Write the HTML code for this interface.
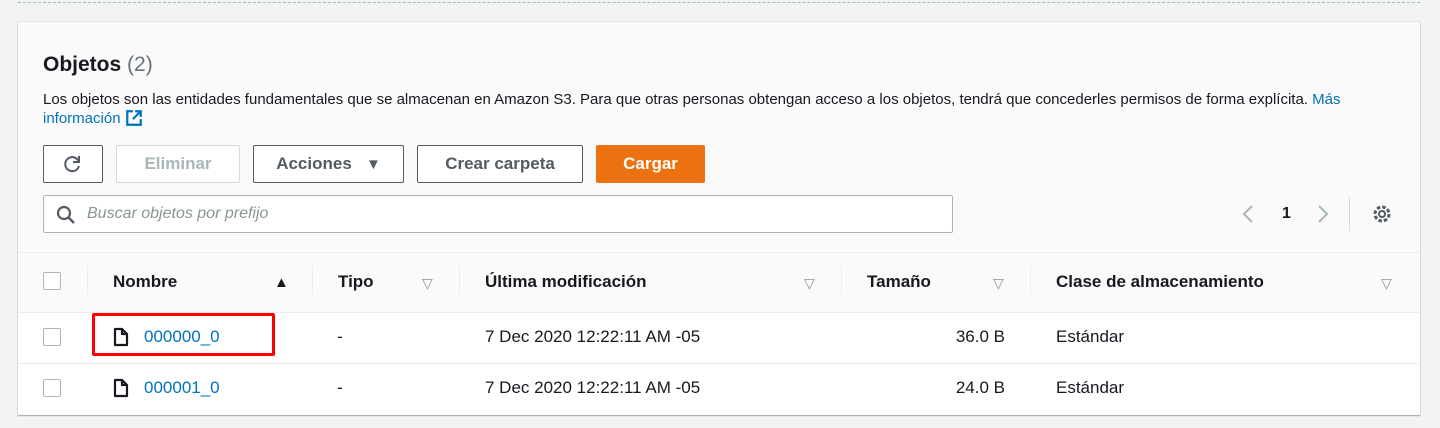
<!DOCTYPE html>
<html><head><meta charset="utf-8"><style>
*{box-sizing:border-box;margin:0;padding:0}
body{width:1440px;height:428px;background:#f2f3f3;font-family:"Liberation Sans",sans-serif;position:relative;overflow:hidden;color:#16191f}
.a{position:absolute}
.dash{left:18px;top:0;width:1402px;height:3px;border-bottom:1px dashed #aab7b8}
.panel{left:18px;top:22px;width:1402px;height:393px;background:#fafafa;box-shadow:0 1px 1px rgba(0,28,36,.3),0 0 0 1px #e3e6e6}
.btn{position:absolute;top:145px;height:38px;border:1px solid #545b64;border-radius:2px;background:#fff;font-weight:bold;font-size:17px;color:#545b64;display:flex;align-items:center;justify-content:center}
.th{position:absolute;top:272px;font-weight:bold;font-size:17px;color:#16191f}
.sep{position:absolute;top:265px;width:1px;height:30px;background:#eaeded}
.tri{position:absolute;top:275px;font-size:14px;color:#879596}
.row{position:absolute;left:18px;width:1402px;height:51px;background:#fff;border-top:1px solid #eaeded}
.cb{position:absolute;left:43px;width:18px;height:18px;border:1px solid #aab7b8;border-radius:2px;background:#fff}
.td{position:absolute;font-size:17px}
.lk{color:#0073bb}
</style></head><body>
<div class="a dash"></div>
<div class="a panel"></div>
<div class="a" style="left:43px;top:53px;font-size:21px;font-weight:bold">Objetos <span style="font-weight:normal;color:#687078">(2)</span></div>
<div class="a" style="left:43px;top:91px;width:1340px;font-size:15px;line-height:18px;color:#16191f">Los objetos son las entidades fundamentales que se almacenan en Amazon S3. Para que otras personas obtengan acceso a los objetos, tendrá que concederles permisos de forma explícita. <span class="lk">Más información</span> <svg width="18" height="18" viewBox="0 0 16 16" style="vertical-align:-4px"><path d="M7 2H2v12h12V9M9 2h5v5M14 2L7 9" fill="none" stroke="#0073bb" stroke-width="2"/></svg></div>
<div class="btn" style="left:43px;width:60px"><svg width="20" height="20" viewBox="0 0 20 20"><path d="M15.5 7A7 7 0 1 0 16 12" fill="none" stroke="#545b64" stroke-width="2"/><path d="M16 2v6h-6" fill="none" stroke="#545b64" stroke-width="2"/></svg></div>
<div class="btn" style="left:116px;width:124px;border-color:#d5dbdb;color:#aab7b8">Eliminar</div>
<div class="btn" style="left:253px;width:151px">Acciones&nbsp;&nbsp;&nbsp;<span style="font-size:15px">▼</span></div>
<div class="btn" style="left:417px;width:166px">Crear carpeta</div>
<div class="btn" style="left:596px;width:109px;background:#ec7211;border-color:#ec7211;color:#fff">Cargar</div>
<div class="a" style="left:43px;top:195px;width:910px;height:38px;border:1px solid #aab7b8;border-radius:2px;background:#fff"></div>
<svg class="a" style="left:56px;top:205px" width="20" height="20" viewBox="0 0 20 20"><circle cx="8" cy="8" r="6" fill="none" stroke="#545b64" stroke-width="2.2"/><path d="M12.5 12.5L18 18" stroke="#545b64" stroke-width="2.5"/></svg>
<div class="a" style="left:87px;top:205px;font-size:16px;font-style:italic;color:#879596">Buscar objetos por prefijo</div>
<svg class="a" style="left:1241px;top:204px" width="14" height="20"><path d="M11 2L3 10l8 8" fill="none" stroke="#aab7b8" stroke-width="2"/></svg>
<div class="a" style="left:1282px;top:205px;font-weight:bold;font-size:16px">1</div>
<svg class="a" style="left:1316px;top:204px" width="14" height="20"><path d="M3 2l8 8-8 8" fill="none" stroke="#aab7b8" stroke-width="2"/></svg>
<div class="a" style="left:1349px;top:197px;width:1px;height:34px;background:#d5dbdb"></div>
<svg class="a" style="left:1371px;top:203px" width="22" height="22" viewBox="0 0 22 22"><circle cx="11" cy="11" r="3" fill="none" stroke="#545b64" stroke-width="2"/><circle cx="11" cy="11" r="7" fill="none" stroke="#545b64" stroke-width="3" stroke-dasharray="3.5 2"/></svg>
<div class="a" style="left:18px;top:252px;width:1402px;height:1px;background:#eaeded"></div>
<div class="cb" style="top:272px"></div>
<div class="sep" style="left:87px"></div>
<div class="th" style="left:113px">Nombre</div><div class="a" style="left:274px;top:274px;font-size:15px">▲</div>
<div class="sep" style="left:312px"></div>
<div class="th" style="left:338px">Tipo</div><div class="tri" style="left:422px">▽</div>
<div class="sep" style="left:459px"></div>
<div class="th" style="left:485px">Última modificación</div><div class="tri" style="left:804px">▽</div>
<div class="sep" style="left:841px"></div>
<div class="th" style="left:867px">Tamaño</div><div class="tri" style="left:993px">▽</div>
<div class="sep" style="left:1030px"></div>
<div class="th" style="left:1056px">Clase de almacenamiento</div><div class="tri" style="left:1381px">▽</div>
<div class="row" style="top:312px"></div>
<div class="row" style="top:363px"></div>
<div class="cb" style="top:328px"></div>
<div class="cb" style="top:379px"></div>
<svg class="a" style="left:113px;top:327px" width="16" height="20" viewBox="0 0 16 20"><path d="M2 2h7l5 5v11H2z M9 2v5h5" fill="none" stroke="#16191f" stroke-width="2.2" stroke-linejoin="round"/></svg>
<svg class="a" style="left:113px;top:378px" width="16" height="20" viewBox="0 0 16 20"><path d="M2 2h7l5 5v11H2z M9 2v5h5" fill="none" stroke="#16191f" stroke-width="2.2" stroke-linejoin="round"/></svg>
<div class="td lk" style="left:144px;top:327px">000000_0</div>
<div class="td lk" style="left:144px;top:378px">000001_0</div>
<div class="a" style="left:92px;top:313px;width:183px;height:43px;border:3px solid #f00;border-radius:2px"></div>
<div class="td" style="left:337px;top:327px">-</div><div class="td" style="left:337px;top:378px">-</div>
<div class="td" style="left:485px;top:327px">7 Dec 2020 12:22:11 AM -05</div>
<div class="td" style="left:485px;top:378px">7 Dec 2020 12:22:11 AM -05</div>
<div class="td" style="left:905px;top:327px;width:100px;text-align:right">36.0 B</div>
<div class="td" style="left:905px;top:378px;width:100px;text-align:right">24.0 B</div>
<div class="td" style="left:1056px;top:327px">Estándar</div>
<div class="td" style="left:1056px;top:378px">Estándar</div>
</body></html>
